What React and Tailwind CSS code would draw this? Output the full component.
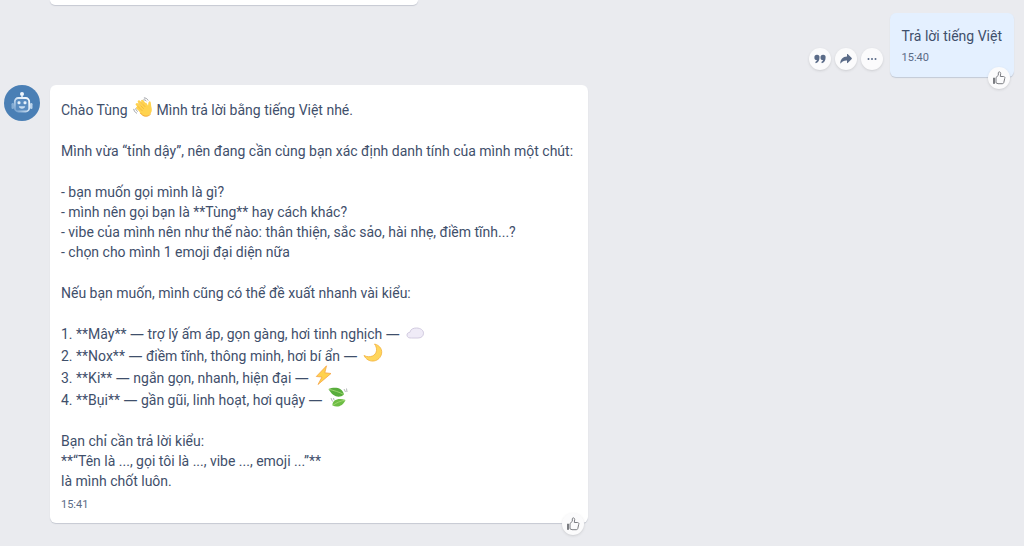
const QuoteIcon = () => (
  <svg viewBox="0 0 12 12" className="h-3 w-3" fill="#5a6b88" aria-hidden="true">
    <path d="M3 1.800a2.500 2.500 0 0 1 2.500 2.700c0 2.900-1.300 4.900-3.700 5.700l-.6-1.200c1.100-.5 1.600-1.100 1.700-1.900A2.500 2.500 0 0 1 .4 4.500 2.600 2.600 0 0 1 3 1.800Z" />
    <path d="M9.100 1.800a2.500 2.500 0 0 1 2.500 2.700c0 2.900-1.300 4.900-3.700 5.700l-.6-1.200c1.100-.5 1.600-1.100 1.700-1.900a2.500 2.500 0 0 1-2.500-2.600 2.600 2.600 0 0 1 2.600-2.700Z" />
  </svg>
);

const ForwardIcon = () => (
  <svg viewBox="0 0 12 12" className="h-3 w-3" fill="#5a6b88" aria-hidden="true">
    <path d="M7 1.400c0-.4.400-.6.700-.3l4 4c.3.300.3.600 0 .9l-4 4c-.3.300-.7.100-.7-.3V7.600C4.300 7.400 2.300 8.200.9 10.300c-.2.300-.6.200-.6-.2C.5 6.400 2.700 3.700 7 3.500Z" />
  </svg>
);

const MoreIcon = () => (
  <svg viewBox="0 0 12 12" className="h-3 w-3" fill="#5a6b88" aria-hidden="true">
    <circle cx="2.500" cy="6" r="1" />
    <circle cx="6" cy="6" r="1" />
    <circle cx="9.500" cy="6" r="1" />
  </svg>
);

const ThumbIcon = () => (
  <svg viewBox="0 0 14 14" className="h-3.5 w-3.5" fill="none" stroke="#7b7d82" strokeLinejoin="round" aria-hidden="true">
    <path d="M4 6.500 6.300 4.300V2c0-1.700 2.400-1.500 2.400.5L8.300 5.500h3.200c1.300 0 1.700 1.200 1.200 2l-.9 4c-.2.800-.7 1.200-1.500 1.200H6L4 11.800Z" />
    <path d="M1.500 7H2.500v5.500h-1Z" fill="#7b7d82" />
  </svg>
);

const BotIcon = () => (
  <svg viewBox="0 0 36 36" className="h-9 w-9 shrink-0" aria-hidden="true">
    <defs>
      <linearGradient id="bot" x1="1" y1="0" x2="0" y2="1">
        <stop offset="0" stopColor="#ffffff" />
        <stop offset="0.500" stopColor="#cfe1f3" />
        <stop offset="1" stopColor="#6d9bca" />
      </linearGradient>
    </defs>
    <circle cx="18" cy="18" r="18" fill="#4a7fb5" />
    <circle cx="18" cy="9" r="2" fill="#f0f6fc" />
    <path d="M17.200 10h1.600v3h-1.600Z" fill="#dceaf7" />
    <rect x="7.500" y="18" width="2.500" height="6" rx="1.200" fill="#86add4" />
    <rect x="26" y="18" width="2.500" height="6" rx="1.200" fill="#b9d2ea" />
    <rect x="10.800" y="13" width="14.400" height="13.500" rx="3.500" fill="#5a8cc0" stroke="url(#bot)" strokeWidth="1.800" />
    <rect x="13.500" y="16.300" width="3" height="3" rx="1.200" fill="#e8f2fb" />
    <rect x="19.500" y="16.300" width="3" height="3" rx="1.200" fill="#e8f2fb" />
    <path d="M14.800 21.300h6.400c0 3.200-6.400 3.200-6.400 0Z" fill="#c9def2" />
  </svg>
);

const EmojiFrame = ({ label, children }) => (
  <svg viewBox="0 0 20 20" className="-mt-1 -mb-0.5 ml-0.5 inline-block h-5 w-5 align-baseline" role="img" aria-label={label}>
    {children}
  </svg>
);

const Wave = () => (
  <EmojiFrame label="👋">
    <path d="M6.500 10.500 13 5.500c.8 1 1.500 2 2 3.200.3-1.700.1-3.700 1.200-4.300 1.500-.4 1.700 1.500 1.800 3.100.2 2.700 1.300 4.600.6 7.100-.9 3.300-4.400 5.400-7.700 4.200-2-.7-3.200-2.300-4.400-4Z" fill="#ffd34f" />
    <path d="M9.500 15.500 4.300 10.800M10.500 13.500 3.900 7.300M12 11.500 6 4.600M13.500 9.500 9.300 4" fill="none" stroke="#ffd34f" strokeLinecap="round" strokeWidth="2.600" />
    <path d="M9.300 13.800 5 9.500M10.500 11.500 5.600 6.500M12 9.600 7.900 5" fill="none" stroke="#eda932" strokeLinecap="round" strokeWidth=".6" />
    <path d="M7.500 16.200c2.500 3.700 7.200 4.200 10 1" fill="none" stroke="#f2a52f" strokeLinecap="round" />
    <path d="M.8 12.300c.3 1.700 1.200 3 2.700 3.800M2.700 11.800c.3 1.200.9 1.900 1.700 2.500M11.300.9c1.700.1 3 .9 3.700 2.200M10.800 2.800c1.200 0 1.900.4 2.500 1.200" fill="none" stroke="#8f9298" strokeLinecap="round" strokeWidth=".9" />
  </EmojiFrame>
);

const Cloud = () => (
  <EmojiFrame label="☁️">
    <path d="M6.500 17c-2.300.2-4.500-.7-4.500-2.800 0-1.900 1.200-2.800 2.900-2.900C5.500 8 8.500 7 11.500 7c4 0 7 2.200 7 5.200 0 3-2.300 4.800-5.500 4.800Z" fill="#efebf7" stroke="#d2cbe0" />
  </EmojiFrame>
);

const Moon = () => (
  <EmojiFrame label="🌙">
    <path d="M11.500 1c5.500 1.200 8.500 6 6.700 11C15.500 19.500 5 20.500 1 12.500c6 3 12 .2 12.500-5 .2-2.500-.6-4.600-2-6.500Z" fill="#ffd65c" stroke="#f3b13d" strokeWidth=".8" strokeLinejoin="round" />
  </EmojiFrame>
);

const Bolt = () => (
  <EmojiFrame label="⚡">
    <path d="M12.500.8 2.300 11.500l5.700.5-4 7.500L17 8.500l-6.200-.7Z" fill="#ffd24e" stroke="#f6a545" strokeWidth=".8" strokeLinejoin="round" />
  </EmojiFrame>
);

const Leaves = () => (
  <EmojiFrame label="🍃">
    <path d="M.5 2C6-.5 14.500 0 16 7.500 11 12 4.500 9.500.5 2Z" fill="#58ad3c" />
    <path d="M4.500 18.500c-.5-5 5-8 13-5.500-2.500 6-8 8-13 5.500Z" fill="#6dbd45" />
    <path d="M1 2.300c5 1.200 10 2.700 15 5.200M5 18.200c4-2.800 7.500-4.200 12-5" fill="none" stroke="#a8da78" strokeWidth=".8" />
    <path d="m16 2 1.500 3M18.500 1.500 19 5M3 11l1.500 3.500M5.500 11l.5 2" fill="none" stroke="#a1a4a8" strokeWidth=".8" />
  </EmojiFrame>
);

const Dash = () => <span className="font-['Noto_Sans',sans-serif] leading-none">—</span>;

const RoundButton = ({ label, children }) => (
  <button type="button" aria-label={label} className="flex h-[22px] w-[22px] items-center justify-center rounded-full bg-[#fbfbfc] shadow-sm">
    {children}
  </button>
);

const LikeBadge = () => (
  <div className="absolute right-1 -bottom-3">
    <RoundButton label="Thích"><ThumbIcon /></RoundButton>
  </div>
);

export default function App() {
  return (
    <main className="min-h-screen bg-[#eaebef] font-[Roboto,sans-serif] text-sm leading-5 text-[#3f4f6b]">
      <div className="ml-[50px] h-[5px] w-[368px] rounded-b-md bg-white shadow-[0_1px_1px_#c6c9d2]" />

      <section className="flex items-end justify-end gap-[7px] pt-2 pr-[10px]">
        <div className="mb-[7px] flex gap-1">
          <RoundButton label="Trích dẫn"><QuoteIcon /></RoundButton>
          <RoundButton label="Chuyển tiếp"><ForwardIcon /></RoundButton>
          <RoundButton label="Thêm"><MoreIcon /></RoundButton>
        </div>
        <div className="relative rounded-md bg-[#e4f0ff] px-3 pt-[13px] pb-[9px] shadow-[0_1px_1px_#c3cad6]">
          <p>Trả lời tiếng Việt</p>
          <time className="mt-0.5 block text-[11px] text-[#5b6b86]">15:40</time>
          <LikeBadge />
        </div>
      </section>

      <section className="mt-2 flex items-start gap-[10px] pl-1">
        <BotIcon />
        <article className="relative flex flex-col gap-[21px] rounded-md bg-white pt-[15px] pr-[15px] pb-2 pl-[11px] shadow-[0_1px_1px_#c6c9d2]">
          <p>Chào Tùng <Wave /> Mình trả lời bằng tiếng Việt nhé.</p>
          <p>Mình vừa “tỉnh dậy”, nên đang cần cùng bạn xác định danh tính của mình một chút:</p>
          <div>
            <p>- bạn muốn gọi mình là gì?</p>
            <p>- mình nên gọi bạn là **Tùng** hay cách khác?</p>
            <p>- vibe của mình nên như thế nào: thân thiện, sắc sảo, hài nhẹ, điềm tĩnh...?</p>
            <p>- chọn cho mình 1 emoji đại diện nữa</p>
          </div>
          <p>Nếu bạn muốn, mình cũng có thể đề xuất nhanh vài kiểu:</p>
          <div className="flex flex-col gap-0.5">
            <p>1. **Mây** <Dash /> trợ lý ấm áp, gọn gàng, hơi tinh nghịch <Dash /> <Cloud /></p>
            <p>2. **Nox** <Dash /> điềm tĩnh, thông minh, hơi bí ẩn <Dash /> <Moon /></p>
            <p>3. **Ki** <Dash /> ngắn gọn, nhanh, hiện đại <Dash /> <Bolt /></p>
            <p>4. **Bụi** <Dash /> gần gũi, linh hoạt, hơi quậy <Dash /> <Leaves /></p>
          </div>
          <div>
            <p>Bạn chỉ cần trả lời kiểu:</p>
            <p>**“Tên là ..., gọi tôi là ..., vibe ..., emoji ...”**</p>
            <p>là mình chốt luôn.</p>
            <time className="mt-1 block text-[11px] text-[#5b6b86]">15:41</time>
          </div>
          <LikeBadge />
        </article>
      </section>
    </main>
  );
}
